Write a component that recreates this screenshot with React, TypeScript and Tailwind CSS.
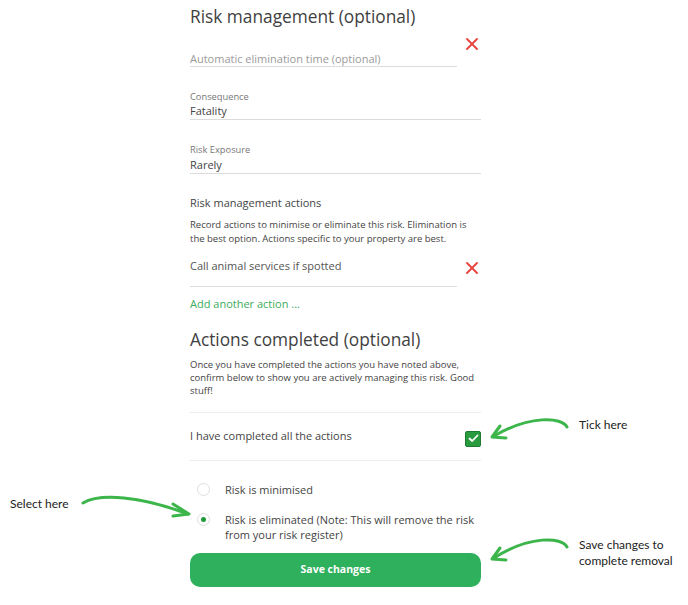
import React from "react";

const XIcon = () => (
  <svg width="12" height="12" viewBox="0 0 12 12" className="shrink-0">
    <path d="M1 1 L11 11 M11 1 L1 11" stroke="#e8403a" strokeWidth="1.8" strokeLinecap="round" />
  </svg>
);

export default function App() {
  const font = { fontFamily: '"Open Sans", "Liberation Sans", sans-serif' };
  return (
    <div className="relative w-[688px] h-[605px] bg-white overflow-hidden" style={font}>
      <div className="ml-[190px] w-[291px] text-[#444]">
        <h1 className="text-[17.3px] leading-[34px] text-[#3f3f3f]">Risk management (optional)</h1>

        <div className="flex items-start">
          <div className="w-[267px] pt-[18px] border-b border-[#dcdcdc]">
            <div className="text-[11px] leading-[14px] text-[#9a9a9a]">Automatic elimination time (optional)</div>
          </div>
          <div className="ml-[9px] mt-[4px]"><XIcon /></div>
        </div>

        <div className="pt-[24px] border-b border-[#dcdcdc]">
          <div className="text-[9.3px] leading-[12px] text-[#777]">Consequence</div>
          <div className="text-[11px] leading-[16px]">Fatality</div>
        </div>

        <div className="pt-[24px] border-b border-[#dcdcdc]">
          <div className="text-[9.3px] leading-[12px] text-[#777]">Risk Exposure</div>
          <div className="mt-[1px] text-[11px] leading-[16px]">Rarely</div>
        </div>

        <div className="pt-[21px] text-[11px] leading-[16px]">Risk management actions</div>
        <p className="mt-[7px] text-[9.5px] leading-[14px]">
          Record actions to minimise or eliminate this risk. Elimination is the best option. Actions specific to your property are best.
        </p>

        <div className="flex items-start">
          <div className="w-[267px] pt-[12px] pb-[12px] border-b border-[#dcdcdc]">
            <div className="text-[11px] leading-[16px] text-[#555]">Call animal services if spotted</div>
          </div>
          <div className="ml-[9px] mt-[16px]"><XIcon /></div>
        </div>

        <div className="mt-[9px] text-[11px] leading-[16px] text-[#3aac5a]">Add another action ...</div>

        <h2 className="mt-[11px] text-[17.3px] leading-[34px] text-[#3f3f3f]">Actions completed (optional)</h2>
        <p className="mt-[1px] text-[9.5px] leading-[13px]">
          Once you have completed the actions you have noted above, confirm below to show you are actively managing this risk. Good stuff!
        </p>

        <div className="mt-[15px] h-[49px] border-y border-[#ececec] flex items-center justify-between">
          <span className="text-[11px]">I have completed all the actions</span>
          <span className="mt-[4px] w-[16px] h-[16px] rounded-[2px] bg-[#2a9a3f] border border-[#1f7a30] flex items-center justify-center">
            <svg width="11" height="9" viewBox="0 0 11 9">
              <path d="M1.5 4.5 L4.2 7 L9.5 1.5" stroke="#fff" strokeWidth="1.8" fill="none" strokeLinecap="round" strokeLinejoin="round" />
            </svg>
          </span>
        </div>

        <div className="mt-[21px] flex items-start">
          <span className="ml-[7px] mt-[1px] w-[13px] h-[13px] rounded-full border border-[#dedede] bg-white shrink-0" />
          <span className="ml-[15px] text-[11px] leading-[15px]">Risk is minimised</span>
        </div>
        <div className="mt-[15px] flex items-start">
          <span className="ml-[7px] mt-[1px] w-[13px] h-[13px] rounded-full border border-[#dedede] bg-white shrink-0 flex items-center justify-center">
            <span className="w-[5px] h-[5px] rounded-full bg-[#1f9a3a]" />
          </span>
          <span className="ml-[15px] text-[11px] leading-[15px]">
            Risk is eliminated (Note: This will remove the risk from your risk register)
          </span>
        </div>

        <button className="mt-[11px] w-[291px] h-[34px] rounded-[10px] bg-[#2fb05d] text-white text-[10.5px] font-bold">
          Save changes
        </button>
      </div>

      <div className="absolute left-[579px] top-[417px] text-[12px] leading-[16px] text-[#222]" style={{ fontFamily: 'Lato, "Liberation Sans", sans-serif' }}>
        Tick here
      </div>
      <div className="absolute left-[10px] top-[496px] text-[12px] leading-[16px] text-[#222]" style={{ fontFamily: 'Lato, "Liberation Sans", sans-serif' }}>
        Select here
      </div>
      <div className="absolute left-[579px] top-[537px] text-[12px] leading-[16px] text-[#222]" style={{ fontFamily: 'Lato, "Liberation Sans", sans-serif' }}>
        Save changes to<br />complete removal
      </div>

      <svg className="absolute left-0 top-0 pointer-events-none" width="688" height="605" viewBox="0 0 688 605">
        <g stroke="#3cb54a" strokeWidth="3" fill="none" strokeLinecap="round" strokeLinejoin="round">
          <path d="M567 427 C 562 417, 530 415, 494 436" />
          <path d="M500 426 L492 437 L506 438" />
          <path d="M567 547 C 562 537, 530 535, 494 558" />
          <path d="M500 548 L492 559 L506 560" />
          <path d="M83 503 C 100 493, 140 496, 188 514" />
          <path d="M173 504 L189 514 L173 516" />
        </g>
      </svg>
    </div>
  );
}
